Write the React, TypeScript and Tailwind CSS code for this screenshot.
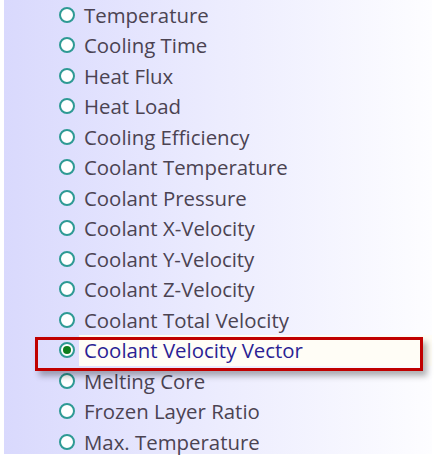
import React from "react";

const items = [
  "Temperature",
  "Cooling Time",
  "Heat Flux",
  "Heat Load",
  "Cooling Efficiency",
  "Coolant Temperature",
  "Coolant Pressure",
  "Coolant X-Velocity",
  "Coolant Y-Velocity",
  "Coolant Z-Velocity",
  "Coolant Total Velocity",
  "Coolant Velocity Vector",
  "Melting Core",
  "Frozen Layer Ratio",
  "Max. Temperature",
];

function Radio({ checked }: { checked: boolean }) {
  return (
    <span className="flex h-[16px] w-[16px] shrink-0 items-center justify-center rounded-full border-2 border-[#2e9a94] bg-white">
      {checked && <span className="h-[8px] w-[8px] rounded-full bg-[#0e7d1c]" />}
    </span>
  );
}

export default function App() {
  return (
    <div className="h-[459px] w-[440px] bg-white pt-[1px] pb-[4px] pl-[4px] pr-[8px]">
      <div className="relative h-full w-full bg-gradient-to-r from-[#d9d9fd] via-[#ececfe] to-[#fdfdff]">
        <ul className="-mt-[1.5px] flex flex-col" style={{ fontFamily: '"Open Sans", "Noto Sans", sans-serif' }}>
          {items.map((label, i) => {
            const sel = i === 11;
            return (
              <li key={label} className="flex h-[30.5px] items-center">
                <div className="flex w-[75px] justify-end pr-[4px]">
                  <Radio checked={sel} />
                </div>
                <span
                  className={
                    "flex h-full flex-1 items-center pl-[5px] text-[20.4px] leading-[24px] " +
                    (sel ? "bg-[#fffdf6] text-[#2b1f94]" : "text-[#4b4352]")
                  }
                >
                  {label}
                </span>
              </li>
            );
          })}
        </ul>
        <div className="pointer-events-none absolute left-[31px] top-[337px] h-[34px] w-[388px] border-[3px] border-[#c00000] shadow-[4px_5px_6px_rgba(0,0,0,0.3)]" />
      </div>
    </div>
  );
}
